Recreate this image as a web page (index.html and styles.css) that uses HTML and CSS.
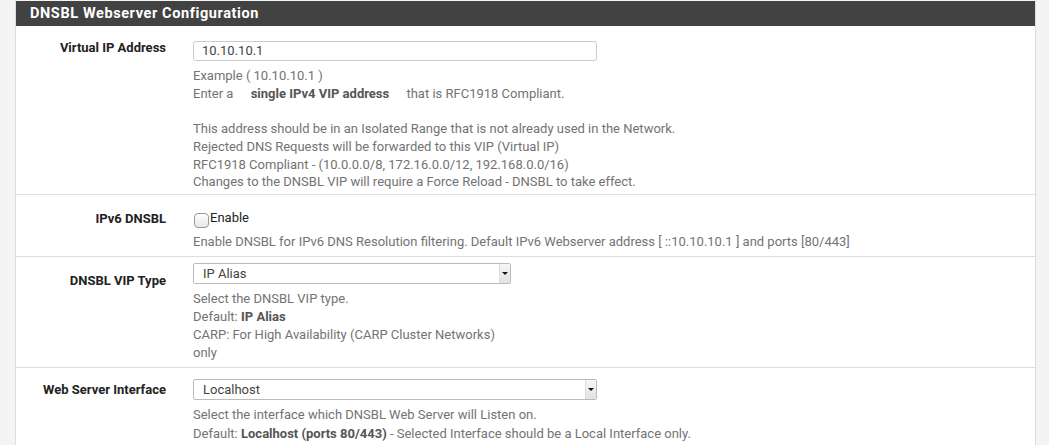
FILE: index.html
```html
<!DOCTYPE html>
<html>
<head>
<meta charset="utf-8">
<link rel="stylesheet" href="styles.css">
</head>
<body>
<div class="page">
  <div class="panel">
    <div class="panel-heading">DNSBL Webserver Configuration</div>
    <div class="row row-vip">
      <div class="label">Virtual IP Address</div>
      <div class="field">
        <div class="input wide">10.10.10.1</div>
        <div class="help">
          <div>Example ( 10.10.10.1 )</div>
          <div>Enter a <b class="gap">single IPv4 VIP address</b> that is RFC1918 Compliant.</div>
          <div class="blank"></div>
          <div>This address should be in an Isolated Range that is not already used in the Network.</div>
          <div>Rejected DNS Requests will be forwarded to this VIP (Virtual IP)</div>
          <div>RFC1918 Compliant - (10.0.0.0/8, 172.16.0.0/12, 192.168.0.0/16)</div>
          <div>Changes to the DNSBL VIP will require a Force Reload - DNSBL to take effect.</div>
        </div>
      </div>
    </div>
    <div class="row row-ipv6">
      <div class="label">IPv6 DNSBL</div>
      <div class="field">
        <div class="check-line"><span class="checkbox"></span><span class="check-text">Enable</span></div>
        <div class="help help-tight">Enable DNSBL for IPv6 DNS Resolution filtering. Default IPv6 Webserver address [ ::10.10.10.1 ] and ports [80/443]</div>
      </div>
    </div>
    <div class="row row-type">
      <div class="label">DNSBL VIP Type</div>
      <div class="field">
        <div class="select medium"><span class="select-value">IP Alias</span><span class="select-arrow"></span></div>
        <div class="help narrow">
          <div>Select the DNSBL VIP type.</div>
          <div>Default: <b>IP Alias</b></div>
          <div>CARP: For High Availability (CARP Cluster Networks) only</div>
        </div>
      </div>
    </div>
    <div class="row row-iface">
      <div class="label">Web Server Interface</div>
      <div class="field">
        <div class="select wide"><span class="select-value">Localhost</span><span class="select-arrow"></span></div>
        <div class="help help-loose">
          <div>Select the interface which DNSBL Web Server will Listen on.</div>
          <div>Default: <b>Localhost (ports 80/443)</b> - Selected Interface should be a Local Interface only.</div>
        </div>
      </div>
    </div>
  </div>
</div>
</body>
</html>
```

FILE: styles.css
```css
html, body {
  margin: 0;
  padding: 0;
  background: #f4f4f4;
  font-family: Roboto, "Liberation Sans", sans-serif;
  font-size: 13px;
  color: #333;
}
.page {
  padding: 0 13px 0 15px;
  height: 445px;
  overflow: hidden;
}
.panel {
  background: #fff;
  border: 1px solid #ddd;
  border-top: 1px solid #f4f4f4;
  border-bottom: none;
}
.panel-heading {
  background: #424242;
  color: #fff;
  font-weight: bold;
  font-size: 14.5px;
  letter-spacing: 0.6px;
  height: 25px;
  line-height: 25px;
  padding-left: 14px;
}
.row {
  display: grid;
  grid-template-columns: 150px 1fr;
  column-gap: 27px;
  border-bottom: 1px solid #ddd;
}
.row-vip { padding: 15px 0 3px; }
.row-ipv6 { padding: 12px 0 5px; }
.row-type { padding: 6px 0 5px; }
.row-iface { padding: 11px 0 10px; }
.label {
  text-align: right;
  font-weight: bold;
  font-size: 13px;
  color: #222;
  line-height: 20px;
  margin-top: -3px;
}
.row-ipv6 .label { margin-top: 2px; }
.row-type .label { margin-top: 8px; }
.row-iface .label { margin-top: 1px; }
.input, .select {
  box-sizing: border-box;
  height: 20px;
  border: 1px solid #ccc;
  border-radius: 3px;
  color: #444;
  line-height: 18px;
  padding-left: 8px;
}
.wide { width: 404px; }
.medium { width: 318px; }
.select {
  display: flex;
  height: 21px;
  line-height: 19px;
  padding-left: 9px;
  border-color: #bbb;
  border-radius: 2px;
}
.select-value { flex: 1; }
.select-arrow {
  width: 10px;
  background: linear-gradient(#f6f6f6, #e2e2e2);
  border-left: 1px solid #ddd;
  display: flex;
  align-items: center;
  justify-content: center;
}
.select-arrow::after {
  content: "";
  border-left: 3px solid transparent;
  border-right: 3px solid transparent;
  border-top: 3px solid #111;
}
.help {
  color: #737373;
  line-height: 17.7px;
  margin-top: 6px;
}
.help b { color: #555; }
.help .gap { margin: 0 14px 0 14px; }
.blank { height: 17.7px; }
.narrow { width: 318px; line-height: 18px; }
.help-tight { margin-top: 5px; }
.help-loose { margin-top: 5px; line-height: 19px; }
.check-line {
  display: flex;
  align-items: flex-start;
  line-height: 16px;
  padding-top: 3px;
}
.checkbox {
  box-sizing: border-box;
  width: 15px;
  height: 15px;
  margin: 3px 1px 0 1px;
  border: 1px solid #999;
  border-radius: 4px;
  background: linear-gradient(#fff, #e8e8e8);
}
.check-text { color: #222; font-size: 13px; }
```
